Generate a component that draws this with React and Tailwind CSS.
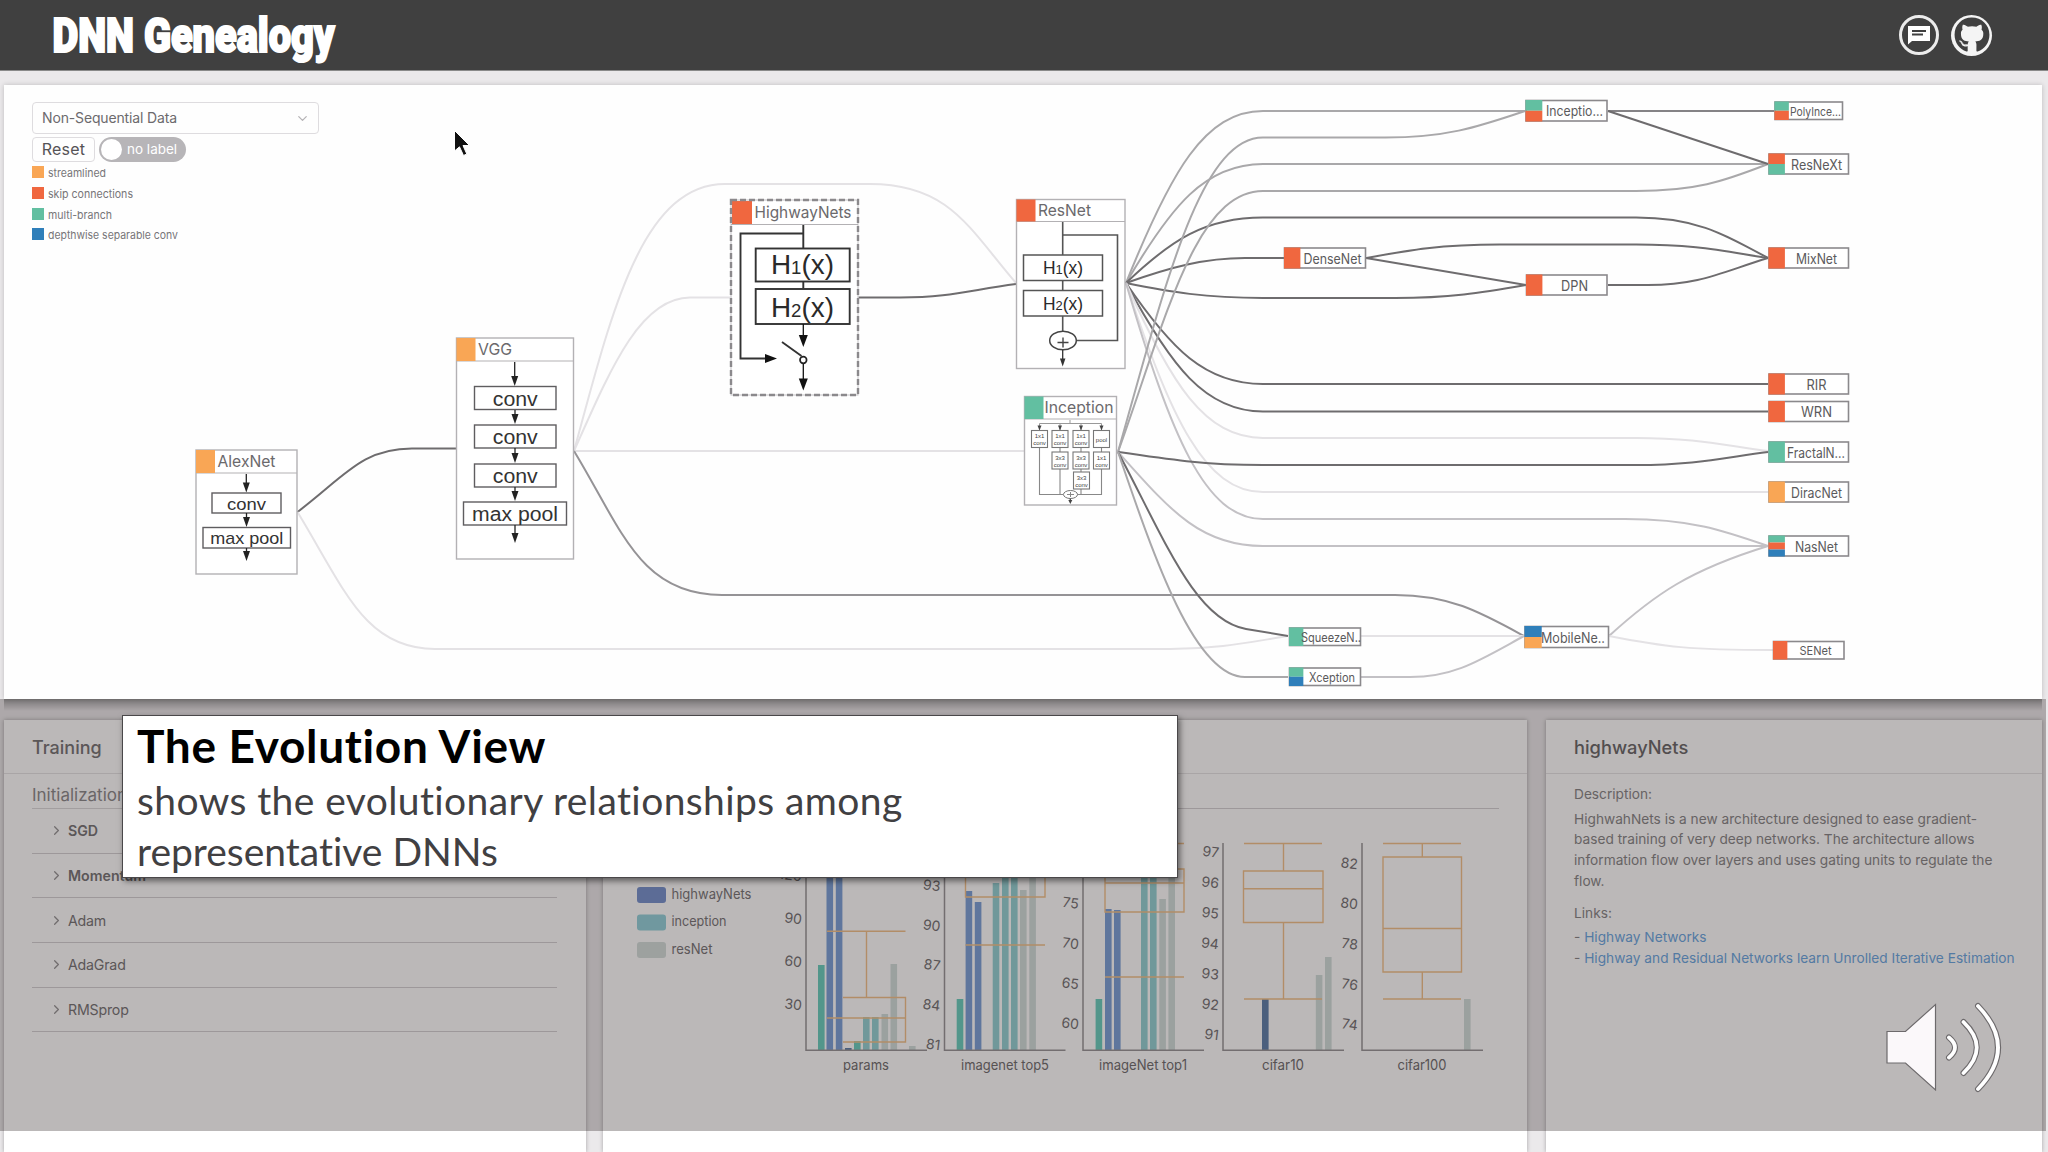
import React from 'react';
import { FaGithub } from 'react-icons/fa';
import { ChevronDown, ChevronRight } from 'lucide-react';

const ORANGE = '#f9a655';
const RED = '#f0673f';
const GREEN = '#62bfa1';
const BLUE = '#2f7fba';

const LEGEND = [
  { label: 'streamlined', swatch: 'bg-[#f9a655]', width: 58 },
  { label: 'skip connections', swatch: 'bg-[#f0673f]', width: 85 },
  { label: 'multi-branch', swatch: 'bg-[#62bfa1]', width: 64 },
  { label: 'depthwise separable conv', swatch: 'bg-[#2f7fba]', width: 130 },
];

const DARK = '#6e6c6e';
const MID = '#a9a8aa';
const SOFT = '#c3c1c5';
const LIGHT = '#e4e2e5';

// [path, colour]
const EDGES = [
  ['M297.5 512 C345 476 362 448.5 412 448.5 H456', DARK],
  ['M297.5 512 C345 590 365 649 435 649 H1170 C1220 649 1250 642 1288 636', LIGHT],
  ['M574 451 C610 320 640 184 725 184 H870 C950 184 970 230 1016 283', LIGHT],
  ['M574 451 C610 370 640 297.5 690 297.5 H730', LIGHT],
  ['M574 451 H1024', LIGHT],
  ['M574 451 C622 530 640 595 722 595 H1395 C1450 595 1480 612 1524 636', '#959396'],
  ['M858.5 297.5 H900 C950 297.5 970 290 1016 284', DARK],

  ['M1126 283 C1171 171 1205 111 1263 111 H1525', MID],
  ['M1126 283 C1171 206 1205 164 1263 164 H1768', MID],
  ['M1126 283 C1171 240 1205 217.5 1263 217.5 H1636 C1695 217.5 1722 233 1768 258', DARK],
  ['M1126 283 C1171 267 1205 258 1245 258 H1284', DARK],
  ['M1126 283 C1171 292 1205 298 1263 298 H1395 C1450 298 1480 293 1526 285', DARK],
  ['M1126 283 C1171 349 1205 384 1263 384 H1768', DARK],
  ['M1126 283 C1171 366 1205 411.5 1263 411.5 H1768', DARK],
  ['M1126 283 C1171 384 1205 438 1263 438 H1636 C1695 438 1722 445 1768 451', LIGHT],
  ['M1126 283 C1171 419 1205 492 1263 492 H1768', LIGHT],
  ['M1126 283 C1171 436 1205 519 1263 519 H1625 C1690 519 1722 530 1768 546', SOFT],

  ['M1118 452 C1165 286 1200 137.5 1263 137.5 H1385 C1445 137.5 1475 128 1525 111', MID],
  ['M1118 452 C1165 322 1195 191 1263 191 H1636 C1695 191 1722 182 1768 164', MID],
  ['M1118 452 C1165 459 1205 465 1263 465 H1636 C1695 465 1722 458 1768 452', DARK],
  ['M1118 452 C1170 510 1200 546 1263 546 H1768', SOFT],
  ['M1118 452 C1165 540 1195 620 1246 629 L1288 636', DARK],
  ['M1118 452 C1155 560 1195 677 1245 677 H1288', MID],

  ['M1608 111 H1774', '#858386'],
  ['M1608 111 L1768 164', DARK],
  ['M1366 258 C1410 250 1440 244.5 1500 244.5 H1636 C1695 244.5 1722 251 1768 258', DARK],
  ['M1366 258 L1526 285', DARK],
  ['M1608 285 H1648 C1700 285 1722 272 1768 258', DARK],
  ['M1361 636 H1524', LIGHT],
  ['M1361 677 H1410 C1455 677 1480 660 1524 636', SOFT],
  ['M1609 636 C1655 594 1690 570 1768 546', SOFT],
  ['M1609 636 C1665 647 1690 650 1773 650', LIGHT],
];

// x, y, w, h, colours, label, label start, label width, font size
const TAGS = [
  [1526, 100.5, 81, 20.5, [GREEN, RED], 'Inceptio...', 1546, 57, 14],
  [1775, 102, 67.5, 17.5, [GREEN, RED], 'PolyInce...', 1790, 51, 12],
  [1769, 154, 79.5, 20, [RED, GREEN], 'ResNeXt', 1791, 51, 14],
  [1284.5, 248, 81, 20, [RED], 'DenseNet', 1303.5, 58, 14],
  [1769, 248, 79.5, 20, [RED], 'MixNet', 1796, 41, 14],
  [1526.5, 275, 80.5, 20, [RED], 'DPN', 1561, 27, 14],
  [1769, 374, 79.5, 20, [RED], 'RIR', 1806.5, 20, 14],
  [1769, 401.5, 79.5, 20, [RED], 'WRN', 1801, 31, 14],
  [1769, 442, 79.5, 20, [GREEN], 'FractalN...', 1787, 58, 14],
  [1769, 482, 79.5, 20, [ORANGE], 'DiracNet', 1791, 51, 14],
  [1769, 536, 79.5, 20, [GREEN, RED, BLUE], 'NasNet', 1795, 43, 14],
  [1525, 626.5, 83.5, 21, [BLUE, ORANGE], 'MobileNe..', 1541, 64, 14],
  [1289.5, 628, 71, 17.5, [GREEN], 'SqueezeN..', 1301, 60, 12.5],
  [1289.5, 668, 71, 17.5, [GREEN, BLUE], 'Xception', 1309, 46, 12.5],
  [1773.5, 641.5, 70.5, 17.5, [RED], 'SENet', 1799.5, 32, 12],
];

const OPTIMIZERS = [
  { name: 'SGD', strong: true },
  { name: 'Momentum', strong: true },
  { name: 'Adam' },
  { name: 'AdaGrad' },
  { name: 'RMSprop' },
];

const C_GREEN = '#6fd0c0';
const C_BLUE = '#7fa4da';
const C_NAVY = '#6484ad';
const C_TEAL = '#97d3d6';
const C_GRAY = '#d3dfdd';
const C_BOX = '#f2c48f';

const SERIES = [
  { name: 'highwayNets', color: '#7c96d0', y: 887, w: 80 },
  { name: 'inception', color: '#97d3dc', y: 914.5, w: 55 },
  { name: 'resNet', color: '#d5dfdd', y: 942, w: 41 },
];

// bars: [x, top, colour]; lines: box plot strokes
const CHARTS = [
  {
    name: 'params', axis: 806, label: [843, 46],
    ticks: [['120', 875], ['90', 918], ['60', 961], ['30', 1004]],
    bars: [[818, 965, C_GREEN], [826.5, 843, C_BLUE], [835.8, 843, C_BLUE], [845, 1048, C_NAVY], [854, 1041, C_GREEN], [863, 1017, C_TEAL], [872, 1017, C_TEAL], [881.5, 1014, C_GRAY], [890.5, 964, C_GRAY], [909, 1046, C_GRAY]],
    lines: 'M827 931.3 H905.5 M866.5 931.3 V997.5 M843 997.5 H905.5 V1042 H843 M827 1018 H905.5',
  },
  {
    name: 'imagenet top5', axis: 944.5, label: [961, 88],
    ticks: [['93', 885], ['90', 925], ['87', 964.5], ['84', 1004.5], ['81', 1044]],
    bars: [[956.7, 999, C_GREEN], [965.6, 891, C_BLUE], [974.8, 902, C_BLUE], [992.7, 883, C_TEAL], [1002, 860, C_TEAL], [1011, 860, C_TEAL], [1020, 890, C_GRAY], [1029.3, 870, C_GRAY]],
    lines: 'M965.5 860 V897 H1045 V860 M965.5 945 H1045',
  },
  {
    name: 'imageNet top1', axis: 1083, label: [1099, 88],
    ticks: [['75', 902.5], ['70', 943], ['65', 983], ['60', 1023]],
    bars: [[1095.6, 999, C_GREEN], [1105, 909, C_BLUE], [1114, 910, C_BLUE], [1141, 860, C_TEAL], [1150, 860, C_TEAL], [1159.3, 899, C_GRAY], [1168.4, 860, C_GRAY]],
    lines: 'M1105 843.5 H1184 M1105 869 V912 H1184 V869 Z M1105 883 H1184 M1105 977 H1184',
  },
  {
    name: 'cifar10', axis: 1223, label: [1262, 42],
    ticks: [['97', 851.5], ['96', 882], ['95', 912.5], ['94', 943], ['93', 973.5], ['92', 1004], ['91', 1034]],
    bars: [[1262, 999, C_NAVY], [1315.8, 975, C_GRAY], [1325, 957, C_GRAY]],
    lines: 'M1244 843.5 H1322 M1283.5 843.5 V871 M1243.5 871 H1323 V922.5 H1243.5 Z M1243.5 888.7 H1323 M1283.5 922.5 V999 M1244 999 H1322',
  },
  {
    name: 'cifar100', axis: 1362, label: [1397.5, 49],
    ticks: [['82', 863], ['80', 903], ['78', 943.5], ['76', 984], ['74', 1024]],
    bars: [[1464, 999, C_GRAY]],
    lines: 'M1383 843.5 H1461 M1422.3 843.5 V857 M1383 857 H1461.5 V972 H1383 Z M1383 928.5 H1461.5 M1422.3 972 V999 M1383 999 H1461',
  },
];

function Label({ x, y, w, size, children, fill = '#5b5a5c', font = 'Inter, sans-serif' }) {
  return (
    <text x={x} y={y} fontSize={size} fill={fill} fontFamily={font} textLength={w} lengthAdjust="spacingAndGlyphs">
      {children}
    </text>
  );
}

function Arrow({ x, from, to, w = 7, h = 10, color = '#222' }) {
  return (
    <g>
      <path d={`M${x} ${from} V${to - h + 1}`} stroke={color} strokeWidth="1.3" />
      <path d={`M${x - w / 2} ${to - h} H${x + w / 2} L${x} ${to} Z`} fill={color} />
    </g>
  );
}

function Card({ x, y, w, h, head, color, title, titleX, titleW, titleY, children }) {
  return (
    <g>
      <rect x={x} y={y} width={w} height={h} fill="#fff" stroke="#b3b1b4" strokeWidth="1.4" />
      <path d={`M${x} ${head} H${x + w}`} stroke="#b3b1b4" strokeWidth="1.2" />
      <rect x={x} y={y} width="19" height={head - y} fill={color} />
      <Label x={titleX} y={titleY} w={titleW} size={16.5} fill="#6b696c">{title}</Label>
      {children}
    </g>
  );
}

function Block({ x, y, w, h, text, textW, size, base }) {
  return (
    <g>
      <rect x={x} y={y} width={w} height={h} fill="#fff" stroke="#5f5d60" strokeWidth="1.4" />
      <Label x={x + (w - textW) / 2} y={base} w={textW} size={size} fill="#333" font="Liberation Sans, sans-serif">{text}</Label>
    </g>
  );
}

function Fn({ x, y, w, n, size, sub }) {
  return (
    <text x={x} y={y} fontSize={size} fill="#2a2a2a" fontFamily="Liberation Sans, sans-serif" textLength={w} lengthAdjust="spacingAndGlyphs">
      H<tspan fontSize={sub}>{n}</tspan>(x)
    </text>
  );
}

function InceptionCell({ x, y, top, bottom }) {
  return (
    <g>
      <rect x={x - 8} y={y} width="16" height="17" fill="#fff" stroke="#777" strokeWidth="1.1" />
      <text x={x} y={y + 7.5} fontSize="6" fill="#444" textAnchor="middle" fontFamily="Liberation Sans, sans-serif">{top}</text>
      <text x={x} y={y + 14.5} fontSize="6" fill="#444" textAnchor="middle" fontFamily="Liberation Sans, sans-serif">{bottom}</text>
    </g>
  );
}

function EvolutionGraph() {
  return (
    <svg className="absolute left-0 top-0" width="2038" height="614" viewBox="4 85 2038 614" fill="none">
      {EDGES.map(([d, color]) => (
        <path key={d} d={d} stroke={color} strokeWidth="2" />
      ))}

      <Card x={196} y={450} w={101} h={124} head={473} color={ORANGE} title="AlexNet" titleX={217.5} titleW={58} titleY={467}>
        <Arrow x={246.3} from={474} to={492.5} />
        <Block x={212} y={493} w={69} h={20} text="conv" textW={39} size={17} base={509.5} />
        <Arrow x={246.5} from={513} to={527} />
        <Block x={203} y={527.5} w={87.5} h={20.5} text="max pool" textW={73} size={17} base={544} />
        <Arrow x={246.5} from={548} to={561} />
      </Card>

      <Card x={456.5} y={338} w={117} h={221} head={361} color={ORANGE} title="VGG" titleX={478} titleW={34} titleY={354.5}>
        <Arrow x={514.7} from={362} to={386} />
        <Block x={474.5} y={386.5} w={81.5} h={23} text="conv" textW={45} size={20} base={405.5} />
        <Arrow x={515} from={410} to={424} />
        <Block x={474.5} y={425} w={81.5} h={23} text="conv" textW={45} size={20} base={444} />
        <Arrow x={515} from={448} to={463} />
        <Block x={474.5} y={464} w={81.5} h={23} text="conv" textW={45} size={20} base={483} />
        <Arrow x={515} from={487} to={501} />
        <Block x={463.5} y={502} w={103} h={23} text="max pool" textW={86} size={20} base={521} />
        <Arrow x={515} from={525} to={543} />
      </Card>

      <rect x="731" y="200" width="127" height="195" fill="#fff" stroke="#c4c2c5" strokeWidth="1" />
      <path d="M731 224.5 H858" stroke="#b3b1b4" strokeWidth="1.2" />
      <rect x="732" y="201" width="20" height="23" fill={RED} />
      <rect x="731" y="200" width="127" height="195" stroke="#8b898c" strokeWidth="2.4" strokeDasharray="6 3" />
      <Label x={754.5} y={217.5} w={97} size={16.5} fill="#6b696c">HighwayNets</Label>
      <path d="M803.3 225 V248 M803.3 282 V288.5 M803.3 233.5 H740.5 V358.5 H768 M782 342 L801.5 356" stroke="#333" strokeWidth="1.9" />
      <path d="M765 354 L777 358.5 L765 363 Z" fill="#111" />
      <rect x="755.7" y="248.5" width="94" height="33" fill="#fff" stroke="#333" strokeWidth="1.9" />
      <rect x="755.7" y="289" width="94" height="35" fill="#fff" stroke="#333" strokeWidth="1.9" />
      <Fn x={771} y={274} w={63} n="1" size={27} sub={18} />
      <Fn x={771} y={317} w={63} n="2" size={27} sub={18} />
      <Arrow x={803.3} from={324} to={347} w={9} h={12} color="#111" />
      <Arrow x={803.3} from={363} to={390.5} w={9} h={12} color="#111" />
      <circle cx="803.3" cy="360" r="3.3" fill="#fff" stroke="#222" strokeWidth="1.7" />

      <Card x={1016.5} y={199.5} w={108.5} h={169} head={221.5} color={RED} title="ResNet" titleX={1038} titleW={53} titleY={216}>
        <path d="M1062.7 222 V331 M1062.7 235 H1117.5 V340.5 H1076" stroke="#555" strokeWidth="1.6" />
        <rect x="1023.5" y="255" width="79" height="25.5" fill="#fff" stroke="#555" strokeWidth="1.5" />
        <rect x="1023.5" y="290.5" width="79" height="25.5" fill="#fff" stroke="#555" strokeWidth="1.5" />
        <Fn x={1043} y={274} w={40} n="1" size={17.5} sub={13} />
        <Fn x={1043} y={309.5} w={40} n="2" size={17.5} sub={13} />
        <ellipse cx="1063" cy="340.5" rx="13.3" ry="9.3" fill="#fff" stroke="#444" strokeWidth="1.5" />
        <path d="M1057.5 342.5 H1068.5 M1063 337.5 V347.5" stroke="#444" strokeWidth="1.4" />
        <Arrow x={1062.7} from={350} to={366.5} w={5.5} h={8} color="#333" />
      </Card>

      <Card x={1024.5} y={396.5} w={92} h={108.5} head={419} color={GREEN} title="Inception" titleX={1044.5} titleW={69} titleY={412.5}>
        <path d="M1070 420 V423.5 M1039.5 430 V423.5 H1101.5 V430 M1060 423.5 V430 M1081 423.5 V430" stroke="#999" strokeWidth="1" />
        {[1039.5, 1060, 1081, 1101.5].map((x) => (
          <path key={x} d={`M${x - 2} 425.5 H${x + 2} L${x} 430.5 Z`} fill="#444" />
        ))}
        <path d="M1039.5 447 V494.5 H1063 M1060 447 V494.5 M1081 447 V494.5 H1077 M1101.5 447 V494.5 H1077" stroke="#888" strokeWidth="1.1" />
        <InceptionCell x={1039.5} y={430.5} top="1x1" bottom="conv" />
        <InceptionCell x={1060} y={430.5} top="1x1" bottom="conv" />
        <InceptionCell x={1081} y={430.5} top="1x1" bottom="conv" />
        <rect x="1093.5" y="430.5" width="16" height="17" fill="#fff" stroke="#777" strokeWidth="1.1" />
        <text x="1101.5" y="441.5" fontSize="6" fill="#444" textAnchor="middle" fontFamily="Liberation Sans, sans-serif">pool</text>
        <InceptionCell x={1060} y={452} top="3x3" bottom="conv" />
        <InceptionCell x={1081} y={452} top="3x3" bottom="conv" />
        <InceptionCell x={1101.5} y={452} top="1x1" bottom="conv" />
        <InceptionCell x={1081.5} y={472} top="3x3" bottom="conv" />
        <ellipse cx="1070.5" cy="494.5" rx="7" ry="4" fill="#fff" stroke="#777" />
        <path d="M1067 494.5 H1074 M1070.5 492 V497" stroke="#888" />
        <Arrow x={1070.3} from={498.5} to={504} w={4} h={4} color="#444" />
      </Card>

      {TAGS.map(([x, y, w, h, colors, label, lx, lw, size]) => (
        <g key={label}>
          <rect x={x} y={y} width={w} height={h} fill="#fff" stroke="#8b898c" strokeWidth="1.6" />
          {colors.map((c, i) => (
            <rect key={c} x={x - 0.5} y={y - 0.5 + (i * (h + 1)) / colors.length} width={h * 0.82} height={(h + 1) / colors.length} fill={c} />
          ))}
          <Label x={lx} y={y + h * 0.5 + size * 0.4} w={lw} size={size}>{label}</Label>
        </g>
      ))}

      {/* pointer */}
      <path d="M454.5 130.5 V151 L459.5 146.8 L463.5 155.5 L466.8 154 L463 145.5 H469.5 Z" fill="#111" stroke="#fff" strokeWidth="1" />
    </svg>
  );
}

function Performance() {
  return (
    <svg className="absolute left-0 top-0" width="924" height="432" viewBox="603 720 924 432" fill="none">
      {SERIES.map((s) => (
        <g key={s.name}>
          <rect x="637" y={s.y} width="29" height="16" rx="3" fill={s.color} />
          <Label x={671.5} y={s.y + 11.5} w={s.w} size={14} fill="#7b797b">{s.name}</Label>
        </g>
      ))}
      {CHARTS.map((c) => (
        <g key={c.name}>
          {c.bars.map(([x, top, color]) => (
            <rect key={x} x={x} y={top} width="6.6" height={1050 - top} fill={color} />
          ))}
          <path d={c.lines} stroke={C_BOX} strokeWidth="1.4" />
          <path d={`M${c.axis} 843 V1050.3 H${c.axis + 121}`} stroke="#9b999b" strokeWidth="1.5" />
          {c.ticks.map(([t, y]) => (
            <text key={t} x={c.axis - 4} y={y + 5.5} fontSize="14" fill="#777577" textAnchor="end" fontFamily="Inter, sans-serif" transform={`rotate(7 ${c.axis - 11} ${y})`}>{t}</text>
          ))}
          <Label x={c.label[0]} y={1070} w={c.label[1]} size={14} fill="#737173">{c.name}</Label>
        </g>
      ))}
    </svg>
  );
}

function Header() {
  return (
    <header className="h-[71px] shrink-0 bg-[#404040] border-b border-[#8a8a8a] flex items-center justify-between pl-[51px] pr-[56px]">
      <svg className="overflow-visible" width="300" height="70" viewBox="0 0 300 70">
        <text x="1.5" y="51.5" fontSize="49" fontWeight="900" fill="#fff" stroke="#fff" strokeWidth="2.2" fontFamily="Roboto, Inter, sans-serif" textLength="282" lengthAdjust="spacingAndGlyphs">DNN Genealogy</text>
      </svg>
      <div className="flex items-center gap-3">
        <div className="size-10 rounded-full border-[3px] border-[#ececec] flex items-center justify-center">
          <svg width="24" height="20" viewBox="0 0 24 20">
            <path d="M1 1 H23 V16 H5 L1 19.5 Z" fill="#fff" />
            <path d="M5 6 H19 M5 9.5 H16" stroke="#404040" strokeWidth="1.8" />
          </svg>
        </div>
        <div className="size-[41px] rounded-full bg-[#f4f4f4] flex items-center justify-center">
          <FaGithub className="size-[36px] text-[#404040]" />
        </div>
      </div>
    </header>
  );
}

function Controls() {
  return (
    <div className="relative w-[287px] ml-7 pt-[17px] text-[#6c6a6d]">
      <div className="h-[32px] border-[1.5px] border-[#dedcdf] rounded-[4px] flex items-center justify-between pl-[9px] pr-2">
        <span className="text-[14px] leading-[18px] tracking-[-0.15px]">Non-Sequential Data</span>
        <ChevronDown className="size-[15px] text-[#b5b3b6]" />
      </div>
      <div className="flex gap-1 mt-[3px]">
        <button className="h-[25px] w-[63px] border border-[#dedcdf] rounded text-[16px] leading-none pb-px tracking-[0.2px] text-[#555356]">Reset</button>
        <div className="h-[25px] w-[87px] rounded-full bg-[#b7b5b8] flex items-center gap-[5px] px-[2px]">
          <div className="size-[21px] rounded-full bg-white" />
          <span className="text-[13.5px] text-white">no label</span>
        </div>
      </div>
      <ul className="mt-1 flex flex-col gap-[8.8px]">
        {LEGEND.map((l) => (
          <li key={l.label} className="flex items-center gap-1 h-3">
            <span className={`size-[12px] ${l.swatch}`} />
            <svg width="140" height="14" viewBox="0 0 140 14">
              <Label x={0} y={11.5} w={l.width} size={11} fill="#777578">{l.label}</Label>
            </svg>
          </li>
        ))}
      </ul>
    </div>
  );
}

function Training() {
  return (
    <section className="w-[582px] bg-white shadow-[0_0_4px_rgba(0,0,0,0.3)] text-[#7a787a]">
      <h2 className="h-[54px] border-b border-[#e6e4e6] pl-7 pt-[15px] text-[18px] leading-[26px] font-medium">Training</h2>
      <div className="pl-7 pr-[29px]">
        <p className="h-[35px] pt-[8px] text-[17px] leading-[26px] text-[#8f8d8f] border-b border-[#dddbdd]">Initialization</p>
        {OPTIMIZERS.map((o) => (
          <div key={o.name} className="h-[44.7px] border-b-[1.5px] border-[#d6d3d6] flex items-center pl-[17px] gap-[4px] text-[14.2px]">
            <ChevronRight className="size-[15px] text-[#999799]" />
            <span className={o.strong ? 'font-semibold' : 'tracking-[-0.2px]'}>{o.name}</span>
          </div>
        ))}
      </div>
    </section>
  );
}

function Details() {
  return (
    <section className="w-[496px] bg-white shadow-[0_0_4px_rgba(0,0,0,0.3)] text-[#8b898b]">
      <h2 className="h-[54px] border-b border-[#e6e4e6] pl-7 pt-[14px] text-[18.3px] leading-[26px] font-medium text-[#6e6c6e]">highwayNets</h2>
      <div className="pl-7 text-[13.7px] leading-[20.7px] whitespace-nowrap">
        <p className="pt-[10px]">Description:</p>
        <p className="pt-[4px]">
          HighwahNets is a new architecture designed to ease gradient-<br />
          based training of very deep networks. The architecture allows<br />
          information flow over layers and uses gating units to regulate the<br />
          flow.
        </p>
        <p className="pt-[11px]">Links:</p>
        <p className="pt-[4px]">- <a className="text-[#6fa9e2]">Highway Networks</a></p>
        <p>- <a className="text-[#6fa9e2]">Highway and Residual Networks learn Unrolled Iterative Estimation</a></p>
      </div>
    </section>
  );
}

function Speaker() {
  const waves = 'M1949 1037.5 Q1961 1047.5 1949 1057.5 M1963.5 1022 Q1990 1047.5 1963.5 1073 M1978 1006 Q2018 1047.5 1978 1089';
  return (
    <svg className="absolute left-[1880px] top-[995px]" width="130" height="105" viewBox="1880 995 130 105" fill="none">
      <path d="M1887 1031.5 H1905.5 L1935.5 1004.5 V1090 L1905.5 1063 H1887 Z" fill="#fbf8fa" stroke="#6d6a6c" strokeWidth="1.2" />
      <path d={waves} stroke="#6d6a6c" strokeWidth="6" strokeLinecap="round" />
      <path d={waves} stroke="#fff" strokeWidth="3.8" strokeLinecap="round" />
    </svg>
  );
}

export default function App() {
  return (
    <div className="relative w-[2048px] h-[1152px] overflow-hidden bg-[#ebe9eb] font-[Inter,sans-serif] flex flex-col">
      <Header />
      <main className="relative flex-1 flex flex-col pl-1 pt-[14px]">
        <section className="relative w-[2038px] h-[614px] shrink-0 bg-[#fefefe] shadow-[0_0_5px_rgba(0,0,0,0.2)]">
          <EvolutionGraph />
          <Controls />
        </section>

        <div className="flex-1 flex mt-[21px]">
          <Training />
          <section className="relative w-[924px] ml-[17px] mr-[19px] bg-white shadow-[0_0_4px_rgba(0,0,0,0.3)]">
            <div className="h-[54px] border-b border-[#e6e4e6]" />
            <div className="h-[35px] mx-7 border-b-[1.5px] border-[#d6d3d6]" />
            <Performance />
          </section>
          <Details />
        </div>
      </main>

      {/* dims everything below the evolution view */}
      <div className="absolute left-0 top-[699px] w-[2046px] h-[432px] bg-[#0a0000]/28">
        <div className="h-3 ml-1 mr-1 bg-linear-to-b from-black/30 to-transparent" />
      </div>

      <div className="absolute left-[122px] top-[715px] w-[1056px] h-[163px] bg-white border-[1.5px] border-[#4a484a] shadow-[2px_3px_6px_rgba(0,0,0,0.5)] pl-[14px] font-[Lato,sans-serif] [font-variant-ligatures:none]">
        <h1 className="pt-[2px] text-[46px] leading-[56px] font-bold tracking-[0.65px] text-black whitespace-nowrap">The Evolution View</h1>
        <p className="pt-px text-[39px] leading-[50.6px] text-[#414042] whitespace-nowrap">
          <span className="tracking-[0.4px]">shows the evolutionary relationships among</span><br />representative DNNs
        </p>
      </div>
      <Speaker />
    </div>
  );
}
